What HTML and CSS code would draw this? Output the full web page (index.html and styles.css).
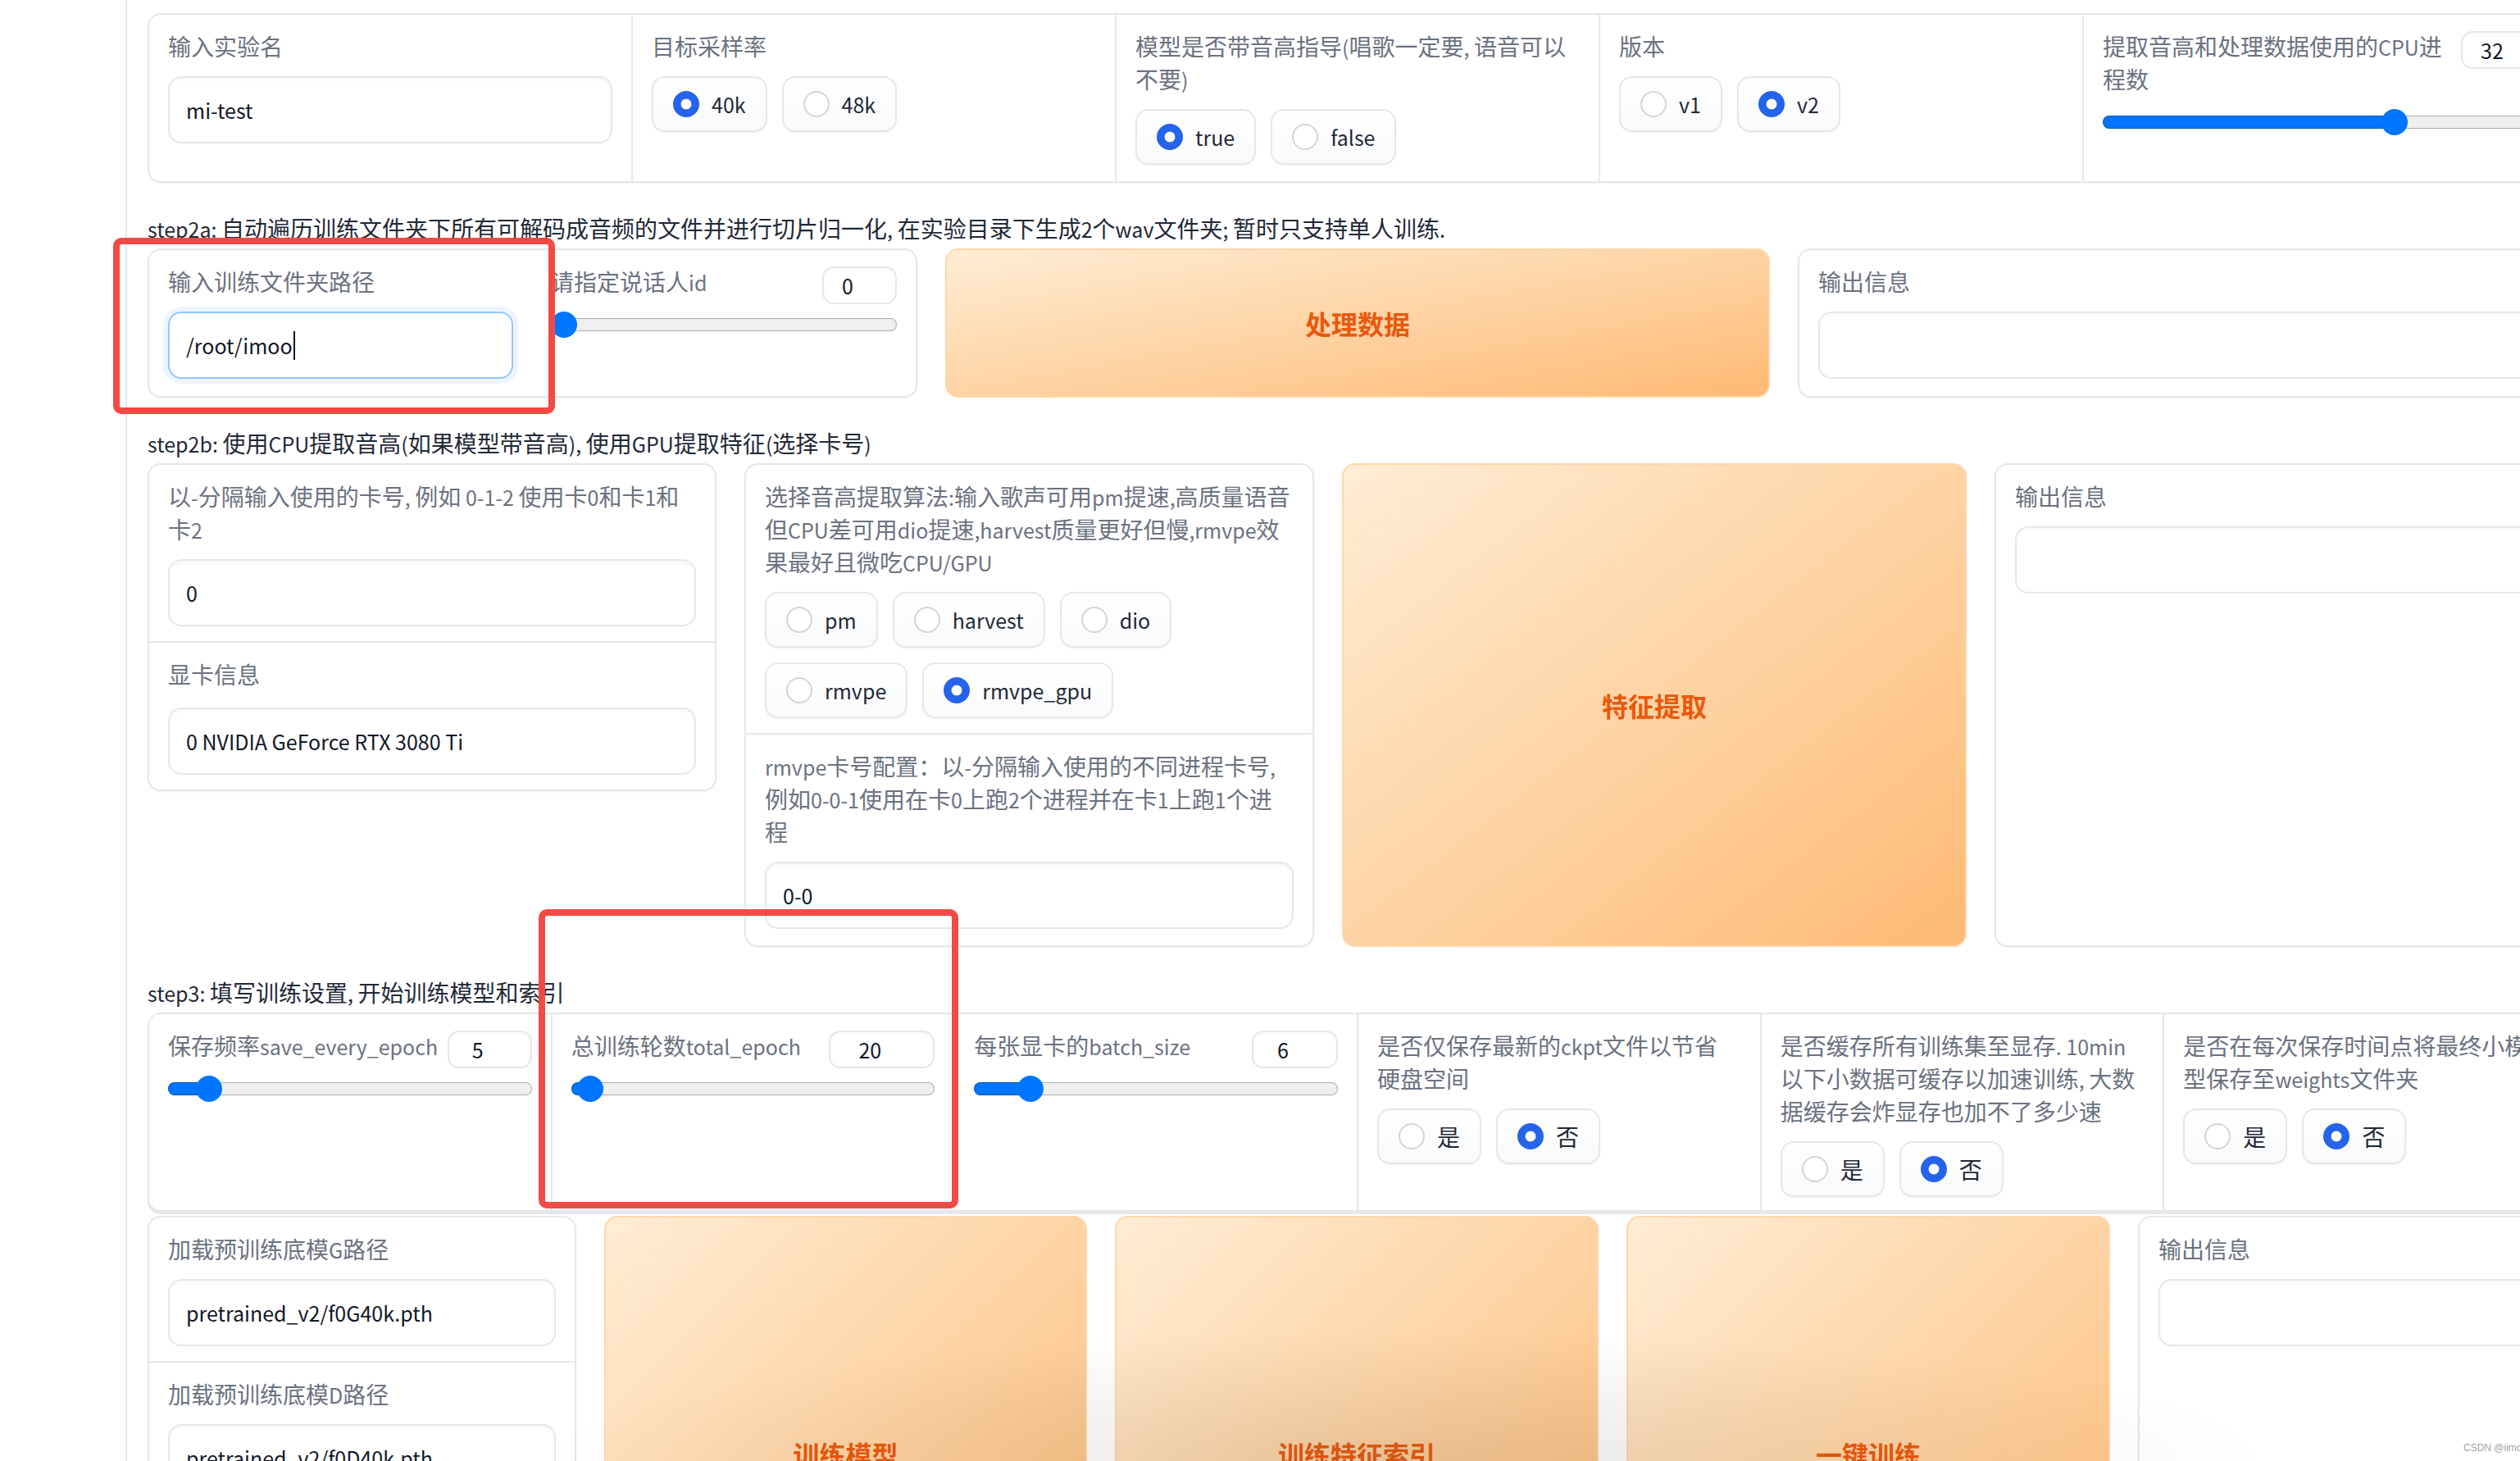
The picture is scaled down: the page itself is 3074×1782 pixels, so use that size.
FILE: index.html
```html
<!DOCTYPE html>
<html lang="zh-CN">
<head>
<meta charset="utf-8">
<title>训练</title>
<link rel="stylesheet" href="styles.css">
</head>
<body>
<main class="page">
<div class="content">

<section class="card row1">
  <div class="blk col">
    <div class="lbl">输入实验名</div>
    <input class="inp" type="text" value="mi-test">
  </div>
  <div class="blk col">
    <div class="lbl">目标采样率</div>
    <div class="radios">
      <label class="radio"><input type="radio" name="sr" checked><span class="en">40k</span></label>
      <label class="radio"><input type="radio" name="sr"><span class="en">48k</span></label>
    </div>
  </div>
  <div class="blk col">
    <div class="lbl">模型是否带音高指导<span class="en">(</span>唱歌一定要<span class="en">, </span>语音可以<br>不要<span class="en">)</span></div>
    <div class="radios">
      <label class="radio"><input type="radio" name="f0" checked><span class="en">true</span></label>
      <label class="radio"><input type="radio" name="f0"><span class="en">false</span></label>
    </div>
  </div>
  <div class="blk col">
    <div class="lbl">版本</div>
    <div class="radios">
      <label class="radio"><input type="radio" name="ver"><span class="en">v1</span></label>
      <label class="radio"><input type="radio" name="ver" checked><span class="en">v2</span></label>
    </div>
  </div>
  <div class="blk col">
    <div class="numrow">
      <div class="lbl">提取音高和处理数据使用的<span class="en">CPU</span>进<br>程数</div>
      <input class="num n105" type="text" value="32">
    </div>
    <input class="range" type="range" min="0" max="48" value="32" style="--fill:65.6%">
  </div>
</section>

<p class="step"><span class="en">step2a: </span>自动遍历训练文件夹下所有可解码成音频的文件并进行切片归一化<span class="en">, </span>在实验目录下生成<span class="en">2</span>个<span class="en">wav</span>文件夹<span class="en">; </span>暂时只支持单人训练<span class="en">.</span></p>

<section class="row r2a">
  <div class="card grp w939">
    <div class="blk pathcol">
      <div class="lbl">输入训练文件夹路径</div>
      <div class="inp focus">/root/imoo<span class="caret"></span></div>
    </div>
    <div class="blk col">
      <div class="numrow">
        <div class="lbl">请指定说话人<span class="en">id</span></div>
        <input class="num n91" type="text" value="0">
      </div>
      <input class="range" type="range" min="0" max="4" value="0" style="--fill:3.8%">
    </div>
  </div>
  <button class="btn w1006">处理数据</button>
  <div class="card out w939">
    <div class="blk">
      <div class="lbl">输出信息</div>
      <textarea class="inp ta"></textarea>
    </div>
  </div>
</section>

<p class="step"><span class="en">step2b: </span>使用<span class="en">CPU</span>提取音高<span class="en">(</span>如果模型带音高<span class="en">), </span>使用<span class="en">GPU</span>提取特征<span class="en">(</span>选择卡号<span class="en">)</span></p>

<section class="row r2b">
  <div class="card w694 c1">
    <div class="blk">
      <div class="lbl">以<span class="en">-</span>分隔输入使用的卡号<span class="en">, </span>例如<span class="en"> 0-1-2 </span>使用卡<span class="en">0</span>和卡<span class="en">1</span>和<br>卡<span class="en">2</span></div>
      <input class="inp" type="text" value="0">
    </div>
    <div class="blk sep">
      <div class="lbl gap21">显卡信息</div>
      <input class="inp" type="text" value="0 NVIDIA GeForce RTX 3080 Ti">
    </div>
  </div>
  <div class="card w695 tall">
    <div class="blk">
      <div class="lbl">选择音高提取算法<span class="en">:</span>输入歌声可用<span class="en">pm</span>提速<span class="en">,</span>高质量语音<br>但<span class="en">CPU</span>差可用<span class="en">dio</span>提速<span class="en">,harvest</span>质量更好但慢<span class="en">,rmvpe</span>效<br>果最好且微吃<span class="en">CPU/GPU</span></div>
      <div class="radios">
        <label class="radio"><input type="radio" name="f0m"><span class="en">pm</span></label>
        <label class="radio"><input type="radio" name="f0m"><span class="en">harvest</span></label>
        <label class="radio"><input type="radio" name="f0m"><span class="en">dio</span></label>
        <label class="radio"><input type="radio" name="f0m"><span class="en">rmvpe</span></label>
        <label class="radio"><input type="radio" name="f0m" checked><span class="en">rmvpe_gpu</span></label>
      </div>
    </div>
    <div class="blk sep">
      <div class="lbl"><span class="en">rmvpe</span>卡号配置：以<span class="en">-</span>分隔输入使用的不同进程卡号<span class="en">,</span><br>例如<span class="en">0-0-1</span>使用在卡<span class="en">0</span>上跑<span class="en">2</span>个进程并在卡<span class="en">1</span>上跑<span class="en">1</span>个进<br>程</div>
      <input class="inp" type="text" value="0-0">
    </div>
  </div>
  <button class="btn w762">特征提取</button>
  <div class="card out w699">
    <div class="blk">
      <div class="lbl">输出信息</div>
      <textarea class="inp ta"></textarea>
    </div>
  </div>
</section>

<p class="step"><span class="en">step3: </span>填写训练设置<span class="en">, </span>开始训练模型和索引</p>

<section class="card row3a">
  <div class="blk col">
    <div class="numrow">
      <div class="lbl">保存频率<span class="en">save_every_epoch</span></div>
      <input class="num n103" type="text" value="5">
    </div>
    <input class="range" type="range" min="1" max="50" value="5" style="--fill:11.2%">
  </div>
  <div class="blk col">
    <div class="numrow">
      <div class="lbl">总训练轮数<span class="en">total_epoch</span></div>
      <input class="num n129" type="text" value="20">
    </div>
    <input class="range" type="range" min="2" max="1000" value="20" style="--fill:5.3%">
  </div>
  <div class="blk col">
    <div class="numrow">
      <div class="lbl">每张显卡的<span class="en">batch_size</span></div>
      <input class="num n105" type="text" value="6">
    </div>
    <input class="range" type="range" min="1" max="40" value="6" style="--fill:15.5%">
  </div>
  <div class="blk col">
    <div class="lbl">是否仅保存最新的<span class="en">ckpt</span>文件以节省<br>硬盘空间</div>
    <div class="radios">
      <label class="radio"><input type="radio" name="latest"><span>是</span></label>
      <label class="radio"><input type="radio" name="latest" checked><span>否</span></label>
    </div>
  </div>
  <div class="blk col">
    <div class="lbl">是否缓存所有训练集至显存<span class="en">. 10min</span><br>以下小数据可缓存以加速训练<span class="en">, </span>大数<br>据缓存会炸显存也加不了多少速</div>
    <div class="radios">
      <label class="radio"><input type="radio" name="cache"><span>是</span></label>
      <label class="radio"><input type="radio" name="cache" checked><span>否</span></label>
    </div>
  </div>
  <div class="blk col">
    <div class="lbl">是否在每次保存时间点将最终小模<br>型保存至<span class="en">weights</span>文件夹</div>
    <div class="radios">
      <label class="radio"><input type="radio" name="weights"><span>是</span></label>
      <label class="radio"><input type="radio" name="weights" checked><span>否</span></label>
    </div>
  </div>
</section>

<section class="row r3b">
  <div class="card w523">
    <div class="blk">
      <div class="lbl">加载预训练底模<span class="en">G</span>路径</div>
      <input class="inp" type="text" value="pretrained_v2/f0G40k.pth">
    </div>
    <div class="blk sep">
      <div class="lbl">加载预训练底模<span class="en">D</span>路径</div>
      <input class="inp" type="text" value="pretrained_v2/f0D40k.pth">
    </div>
  </div>
  <button class="btn w589">训练模型</button>
  <button class="btn w590">训练特征索引</button>
  <button class="btn w590">一键训练</button>
  <div class="card out w524">
    <div class="blk">
      <div class="lbl">输出信息</div>
      <textarea class="inp ta"></textarea>
    </div>
  </div>
</section>

</div>
</main>

<div class="shade"></div>
<div class="mark mark1"></div>
<div class="mark mark2"></div>
<div class="wm">CSDN @iimo</div>
</body>
</html>
```

FILE: styles.css
```css
* { box-sizing: border-box; }
html, body { margin: 0; padding: 0; }
body {
  position: relative;
  width: 3074px;
  height: 1782px;
  overflow: hidden;
  background: #fff;
  font-family: "Noto Sans CJK SC", "Noto Sans", sans-serif;
  font-size: 28px;
  color: #1f2937;
}
.page {
  display: block;
  margin-left: 153px;
  border-left: 2px solid #e5e7eb;
  padding: 16px 0 0 25px;
  height: 1782px;
}
.content { width: 2952px; }

/* Latin runs: the CJK font's Latin glyphs are ~11% wider than the reference's */
.en { font-size: 25px; line-height: 1; }

.card {
  background: #fff;
  border: 2px solid #e5e7eb;
  border-radius: 16px;
  box-shadow: 0 1px 2px rgba(0, 0, 0, 0.05);
  overflow: hidden;
}
.row { display: flex; gap: 34px; }
.row > * { flex: none; }

.row1 { display: flex; height: 207px; }
.row3a { display: flex; height: 243px; box-shadow: 0 3px 0 #e5e7eb; }
.col { flex: 1 1 0; min-width: 0; }
.col + .col { border-left: 2px solid #e5e7eb; }
.blk { padding: 18px 23px; }
.sep { border-top: 2px solid #e5e7eb; }

.lbl {
  font-size: 28px;
  line-height: 40px;
  color: #6b7280;
  margin-bottom: 17px;
  white-space: nowrap;
}
.lbl.gap21 { margin-bottom: 21px; }
.step {
  margin: 35px 0 5px;
  font-size: 28px;
  line-height: 40px;
  color: #1f2937;
  white-space: nowrap;
}

.inp {
  display: block;
  width: 100%;
  height: 82px;
  margin: 0;
  padding: 0 20px;
  border: 2px solid #e5e7eb;
  border-radius: 16px;
  background: #fff;
  font-family: inherit;
  font-size: 25px;
  color: #111827;
  box-shadow: inset 0 2px 4px rgba(0, 0, 0, 0.04);
  outline: none;
}
div.inp { display: flex; align-items: center; }
.ta { resize: none; overflow: hidden; }
.focus {
  border-color: #93c5fd;
  box-shadow: 0 0 0 6px #edf4ff;
}
.caret {
  display: inline-block;
  width: 2px;
  height: 35px;
  margin-left: 1px;
  background: #111827;
}

.radios { display: flex; flex-wrap: wrap; gap: 18px; }
.radio {
  display: inline-flex;
  align-items: center;
  gap: 15px;
  height: 68px;
  padding: 0 24px;
  border: 2px solid #e5e7eb;
  border-radius: 16px;
  background: linear-gradient(to top, #f9fafb, #fff);
  box-shadow: 0 1px 2px rgba(0, 0, 0, 0.06);
  color: #1f2937;
  font-size: 28px;
  line-height: 40px;
  white-space: nowrap;
}
.radio input {
  -webkit-appearance: none;
  appearance: none;
  flex: none;
  width: 32px;
  height: 32px;
  margin: 0;
  border: 2px solid #d1d5db;
  border-radius: 50%;
  background: #fff;
}
.radio input:checked {
  border-color: #2563eb;
  background: radial-gradient(circle, #fff 0 6px, #2563eb 6.8px);
}

.numrow {
  display: flex;
  align-items: flex-start;
  justify-content: space-between;
  gap: 8px;
}
.numrow .lbl { margin-bottom: 0; flex: 1 1 auto; min-width: 0; }
.num {
  flex: none;
  height: 46px;
  margin: 2px 0 -8px;
  padding: 0 29px 0 0;
  text-align: center;
  border: 2px solid #e5e7eb;
  border-radius: 14px;
  background: #fff;
  font-family: inherit;
  font-size: 25px;
  color: #111827;
  box-shadow: inset 0 2px 4px rgba(0, 0, 0, 0.03);
  outline: none;
}
.n91 { width: 91px; }
.n103 { width: 103px; }
.n105 { width: 105px; }
.n129 { width: 129px; }

.range {
  -webkit-appearance: none;
  appearance: none;
  display: block;
  width: 100%;
  height: 16px;
  margin: 25px 0 0;
  padding: 0;
  border-radius: 8px;
  background: linear-gradient(to right, #0075ff var(--fill), #efefef var(--fill));
  box-shadow: inset 0 0 0 1px rgba(0, 0, 0, 0.28);
  outline: none;
}
.range::-webkit-slider-thumb {
  -webkit-appearance: none;
  appearance: none;
  width: 32px;
  height: 32px;
  border: 0;
  border-radius: 50%;
  background: #0075ff;
}

.btn {
  display: flex;
  align-items: center;
  justify-content: center;
  margin: 0;
  padding: 0;
  border: 2px solid #fed7aa;
  border-radius: 16px;
  background: linear-gradient(to bottom right, #ffedd5, #fdba74);
  color: #ea580c;
  font-family: inherit;
  font-size: 32px;
  font-weight: 700;
}

.r2a { height: 182px; }
.grp { display: flex; }
.pathcol { flex: 0 0 467px; }
.r2b { height: 590px; align-items: flex-start; }
.r2b > .tall, .r2b > .btn, .r2b > .out { align-self: stretch; }
.r3b { height: 580px; margin-top: 5px; }

.w523 { width: 523px; }
.w524 { width: 524px; }
.w589 { width: 589px; }
.w590 { width: 590px; }
.w694 { width: 694px; }
.w695 { width: 695px; }
.w699 { width: 699px; }
.w762 { width: 762px; }
.w939 { width: 939px; }
.w1006 { width: 1006px; }

.shade {
  position: absolute;
  left: 660px;
  top: 1622px;
  width: 2110px;
  height: 160px;
  background: radial-gradient(ellipse 50% 100% at 50% 100%, rgba(80, 60, 40, 0.12), rgba(80, 60, 40, 0) 100%);
  pointer-events: none;
}
.mark {
  position: absolute;
  border: 8px solid #f24a44;
  border-radius: 10px;
  pointer-events: none;
}
.mark1 { left: 138px; top: 290px; width: 539px; height: 215px; }
.mark2 { left: 657px; top: 1109px; width: 512px; height: 365px; }
.wm {
  position: absolute;
  left: 3005px;
  top: 1759px;
  font-family: "Liberation Sans", Arial, sans-serif;
  font-size: 12px;
  color: #a3a3a3;
  white-space: nowrap;
}
```
